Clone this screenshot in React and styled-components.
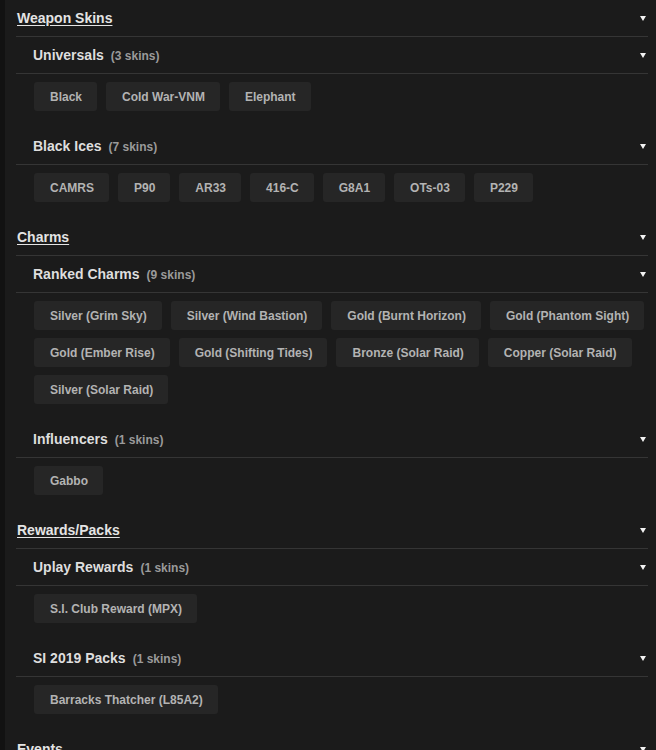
import React from 'react'
import styled, { createGlobalStyle } from 'styled-components';

const GlobalStyle = createGlobalStyle`
  html, body {
    margin: 0;
    padding: 0;
    background: #1b1b1b;
  }
  body {
    font-family: "Liberation Sans", Arial, sans-serif;
  }
`;

const Page = styled.div`
  min-height: 750px;
  border-left: 5px solid #121212;
  padding: 0 8px 0 11px;
  background: #1b1b1b;
`;

const HeaderRow = styled.div`
  display: flex;
  align-items: center;
  justify-content: space-between;
  height: 36px;
  border-bottom: 1px solid #353535;
  padding-left: ${props => props.$indent ? '17px' : '1px'};
  padding-right: 2px;
`;

const SectionTitle = styled.span`
  color: #e4e4e4;
  font-size: 14px;
  font-weight: bold;
  text-decoration: underline;
  text-underline-offset: 2px;
`;

const SubTitle = styled.span`
  color: #dedede;
  font-size: 14px;
  font-weight: bold;
`;

const Count = styled.span`
  color: #9a9a9a;
  font-size: 12px;
  font-weight: bold;
  margin-left: 7px;
`;

const Arrow = styled.span`
  width: 0;
  height: 0;
  border-left: 3px solid transparent;
  border-right: 3px solid transparent;
  border-top: 5px solid #f2f2f2;
`;

const ChipList = styled.div`
  display: flex;
  flex-wrap: wrap;
  gap: 8px 9px;
  padding: 8px 0 17px 18px;
`;

const Chip = styled.div`
  height: 29px;
  display: flex;
  align-items: center;
  padding: 0 15px 0 16px;
  background: #262626;
  border-radius: 3px;
  color: #b3b3b3;
  font-size: 12px;
  font-weight: bold;
`;

const data = [
  {
    title: 'Weapon Skins',
    groups: [
      { name: 'Universals', skins: ['Black', 'Cold War-VNM', 'Elephant'] },
      { name: 'Black Ices', skins: ['CAMRS', 'P90', 'AR33', '416-C', 'G8A1', 'OTs-03', 'P229'] },
    ],
  },
  {
    title: 'Charms',
    groups: [
      {
        name: 'Ranked Charms',
        skins: [
          'Silver (Grim Sky)', 'Silver (Wind Bastion)', 'Gold (Burnt Horizon)', 'Gold (Phantom Sight)',
          'Gold (Ember Rise)', 'Gold (Shifting Tides)', 'Bronze (Solar Raid)', 'Copper (Solar Raid)',
          'Silver (Solar Raid)',
        ],
      },
      { name: 'Influencers', skins: ['Gabbo'] },
    ],
  },
  {
    title: 'Rewards/Packs',
    groups: [
      { name: 'Uplay Rewards', skins: ['S.I. Club Reward (MPX)'] },
      { name: 'SI 2019 Packs', skins: ['Barracks Thatcher (L85A2)'] },
    ],
  },
  {
    title: 'Events',
    groups: [],
  },
]

const Group = ({ group }) => {
  return <div>
    <HeaderRow $indent>
      <div>
        <SubTitle>{group.name}</SubTitle>
        <Count>({group.skins.length} skins)</Count>
      </div>
      <Arrow />
    </HeaderRow>
    <ChipList>
      {group.skins.map(skin => <Chip key={skin}>{skin}</Chip>)}
    </ChipList>
  </div>
}

const App = () => {
  return <Page>
    <GlobalStyle />
    {data.map(section => <div key={section.title}>
      <HeaderRow>
        <SectionTitle>{section.title}</SectionTitle>
        <Arrow />
      </HeaderRow>
      {section.groups.map(group => <Group key={group.name} group={group} />)}
    </div>)}
  </Page>
}

export default App;
